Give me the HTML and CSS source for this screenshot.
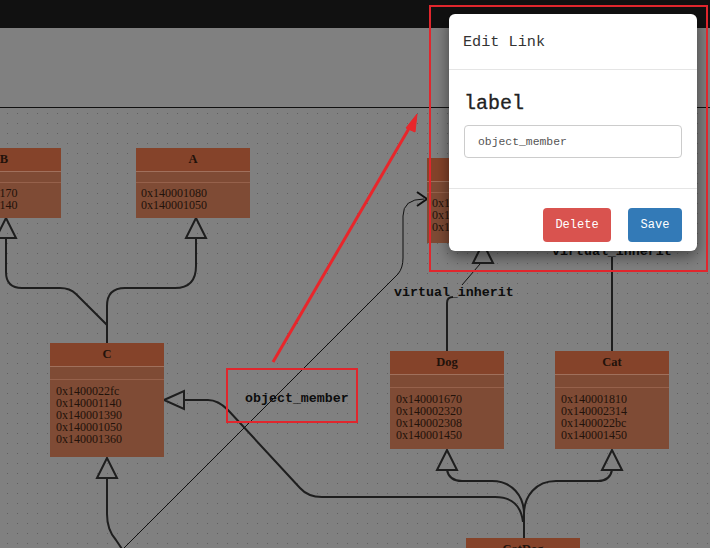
FILE: index.html
```html
<!DOCTYPE html>
<html>
<head>
<meta charset="utf-8">
<link rel="stylesheet" href="styles.css">
</head>
<body>
<div class="app">
  <div class="topbar"></div>
  <div class="toolbar"></div>
  <div class="canvas">
    <svg class="edges" width="710" height="440" viewBox="0 108 710 440">
      <g class="inherit">
        <!-- C -> B / A -->
        <path d="M107,343 V325 L76,294 Q70,288 60,288 H22 Q6,288 6,272 V238"/>
        <path d="M107,325 V306 Q107,288 125,288 H175 Q196,288 196,266 V238"/>
        <path d="M6,218 L-4,238 H16 Z"/>
        <path d="M196,218 L186,238 H206 Z"/>
        <!-- CatDog -> Dog / Cat -->
        <path d="M447,470 Q449,481 462,481 H492 C512,481 524,496 524,514 V540"/>
        <path d="M612,470 Q610,481 598,481 H556 C536,481 524,496 524,514"/>
        <path d="M447,450 L437,470 H457 Z"/>
        <path d="M612,450 L602,470 H622 Z"/>
        <!-- CatDog -> C -->
        <path d="M184,400 H208 Q218,400 228,410 L300,488 Q308,497 322,497 H495 Q520,497 523,522"/>
        <path d="M164,400 L184,391 V409 Z"/>
        <!-- bottom -> C -->
        <path d="M107,478 V514 Q107,530 116,540 L124,552"/>
        <path d="M107,458 L97,478 H117 Z"/>
        <!-- Dog -> label -->
        <path d="M447,351 V303 Q447,297 453,297"/>
        <path d="M483,243 L473,263 H493 Z"/>
        <!-- Cat -> label -->
        <path d="M612,351 V257"/>
      </g>
      <g class="thin">
        <path d="M124,548 L398,274 Q403,268 403,258 V216 Q403,199 424,199"/>
        <path d="M462,285 L480,264"/>
      </g>
      <path class="open-arrow" d="M417,192 L427,199 L417,206"/>
    </svg>

    <div class="node" style="left:-53px;top:40px;height:70px">
      <div class="node-title">B</div>
      <div class="node-attrs"></div>
      <div class="node-methods"><div>0x140001170</div><div>0x140001140</div></div>
    </div>
    <div class="node" style="left:136px;top:40px;height:70px">
      <div class="node-title">A</div>
      <div class="node-attrs"></div>
      <div class="node-methods"><div>0x140001080</div><div>0x140001050</div></div>
    </div>
    <div class="node" style="left:427px;top:50px;height:85px">
      <div class="node-title">Animal</div>
      <div class="node-attrs"></div>
      <div class="node-methods"><div>0x140001500</div><div>0x140001510</div><div>0x140001520</div></div>
    </div>
    <div class="node node-tall" style="left:50px;top:235px;height:114px">
      <div class="node-title">C</div>
      <div class="node-attrs"></div>
      <div class="node-methods"><div>0x1400022fc</div><div>0x140001140</div><div>0x140001390</div><div>0x140001050</div><div>0x140001360</div></div>
    </div>
    <div class="node node-tall" style="left:390px;top:243px;height:98px">
      <div class="node-title">Dog</div>
      <div class="node-attrs"></div>
      <div class="node-methods"><div>0x140001670</div><div>0x140002320</div><div>0x140002308</div><div>0x140001450</div></div>
    </div>
    <div class="node node-tall" style="left:555px;top:243px;height:98px">
      <div class="node-title">Cat</div>
      <div class="node-attrs"></div>
      <div class="node-methods"><div>0x140001810</div><div>0x140002314</div><div>0x1400022bc</div><div>0x140001450</div></div>
    </div>
    <div class="node" style="left:466px;top:430px;height:98px">
      <div class="node-title">CatDog</div>
      <div class="node-attrs"></div>
      <div class="node-methods"></div>
    </div>

    <div class="edge-label" style="left:394px;top:178px">virtual_inherit</div>
    <div class="edge-label" style="left:552px;top:137px">virtual_inherit</div>
    <div class="edge-label" style="left:245px;top:284px">object_member</div>
  </div>

  <div class="modal">
    <div class="modal-header">Edit Link</div>
    <div class="modal-body">
      <div class="field-label">label</div>
      <div class="field-input">object_member</div>
    </div>
    <div class="modal-footer">
      <button class="btn btn-danger">Delete</button>
      <button class="btn btn-primary">Save</button>
    </div>
  </div>

  <svg class="annotations" width="710" height="548" viewBox="0 0 710 548">
    <rect x="430" y="6" width="277" height="265"/>
    <rect x="227" y="369" width="130" height="53"/>
    <line x1="273" y1="362" x2="411" y2="125"/>
    <path class="head" d="M417,114 L406,128 L415,132 Z"/>
  </svg>
</div>
</body>
</html>
```

FILE: styles.css
```css
* { box-sizing: border-box; }
html, body { margin: 0; padding: 0; }
body { background: #808080; }

.app {
  position: relative;
  width: 710px;
  height: 548px;
  overflow: hidden;
  display: flex;
  flex-direction: column;
  background: #808080;
}

.topbar {
  height: 28px;
  background: #111111;
  flex: none;
}

.toolbar {
  height: 80px;
  flex: none;
  background: #808080;
  border-bottom: 1px solid #111;
}

.canvas {
  position: relative;
  flex: 1;
  background:
    linear-gradient(to right, #808080 9px, transparent 9px) 8px 6px / 10px 10px,
    linear-gradient(to bottom, #808080 9px, #606060 9px) 8px 6px / 10px 10px;
}

.edges {
  position: absolute;
  left: 0;
  top: 0;
  overflow: visible;
}

.inherit path {
  fill: none;
  stroke: #1e1e1e;
  stroke-width: 2;
}

.thin path {
  fill: none;
  stroke: #111;
  stroke-width: 1;
}

.open-arrow {
  fill: none;
  stroke: #111;
  stroke-width: 2;
}

.node {
  position: absolute;
  width: 114px;
  background: #7f4b35;
  color: #22120a;
  font-family: "Liberation Serif", serif;
  font-size: 12px;
  line-height: 12px;
}

.node-title {
  height: 24px;
  line-height: 23px;
  background: #85432a;
  border-bottom: 1px solid #a0705c;
  text-align: center;
  font-weight: bold;
  font-size: 12.5px;
}

.node-attrs {
  height: 11px;
  border-bottom: 1px solid #96614b;
}

.node-tall .node-attrs {
  height: 13px;
}

.node-methods {
  padding: 4px 5px 0;
}

.node-tall .node-methods {
  padding: 5px 5px 0 6px;
}

.edge-label {
  position: absolute;
  font-family: "Liberation Mono", monospace;
  font-weight: bold;
  font-size: 13.3px;
  line-height: 14px;
  color: #0d0d0d;
  white-space: nowrap;
}

.modal {
  position: absolute;
  left: 449px;
  top: 14px;
  width: 248px;
  height: 237px;
  background: #fff;
  border-radius: 6px;
  box-shadow: 0 5px 15px rgba(0, 0, 0, 0.5);
  display: flex;
  flex-direction: column;
  font-family: "Liberation Mono", monospace;
  color: #333;
}

.modal-header {
  height: 56px;
  padding: 18px 14px 0;
  font-size: 15.2px;
  line-height: 20px;
  border-bottom: 1px solid #e5e5e5;
}

.modal-body {
  padding: 22px 15px 30px;
  display: flex;
  flex-direction: column;
  gap: 9px;
  border-bottom: 1px solid #e5e5e5;
}

.field-label {
  font-size: 20px;
  line-height: 24px;
  color: #222;
  -webkit-text-stroke: 0.3px #222;
}

.field-input {
  height: 33px;
  border: 1px solid #ccc;
  border-radius: 4px;
  padding: 0 13px;
  font-size: 11.4px;
  line-height: 33px;
  color: #555;
}

.modal-footer {
  flex: 1;
  display: flex;
  justify-content: flex-end;
  align-items: flex-start;
  gap: 17px;
  padding: 19px 15px 0;
}

.btn {
  height: 34px;
  border: none;
  border-radius: 4px;
  color: #fff;
  font-family: "Liberation Mono", monospace;
  font-size: 12px;
  padding: 0;
}

.btn-danger { width: 68px; background: #d9534f; }
.btn-primary { width: 54px; background: #337ab7; }

.annotations {
  position: absolute;
  left: 0;
  top: 0;
  pointer-events: none;
}

.annotations rect {
  fill: none;
  stroke: #e0262d;
  stroke-width: 2;
}

.annotations line {
  stroke: #e8262b;
  stroke-width: 3;
}

.annotations .head {
  fill: #e8262b;
  stroke: #e8262b;
  stroke-width: 1;
}
```
